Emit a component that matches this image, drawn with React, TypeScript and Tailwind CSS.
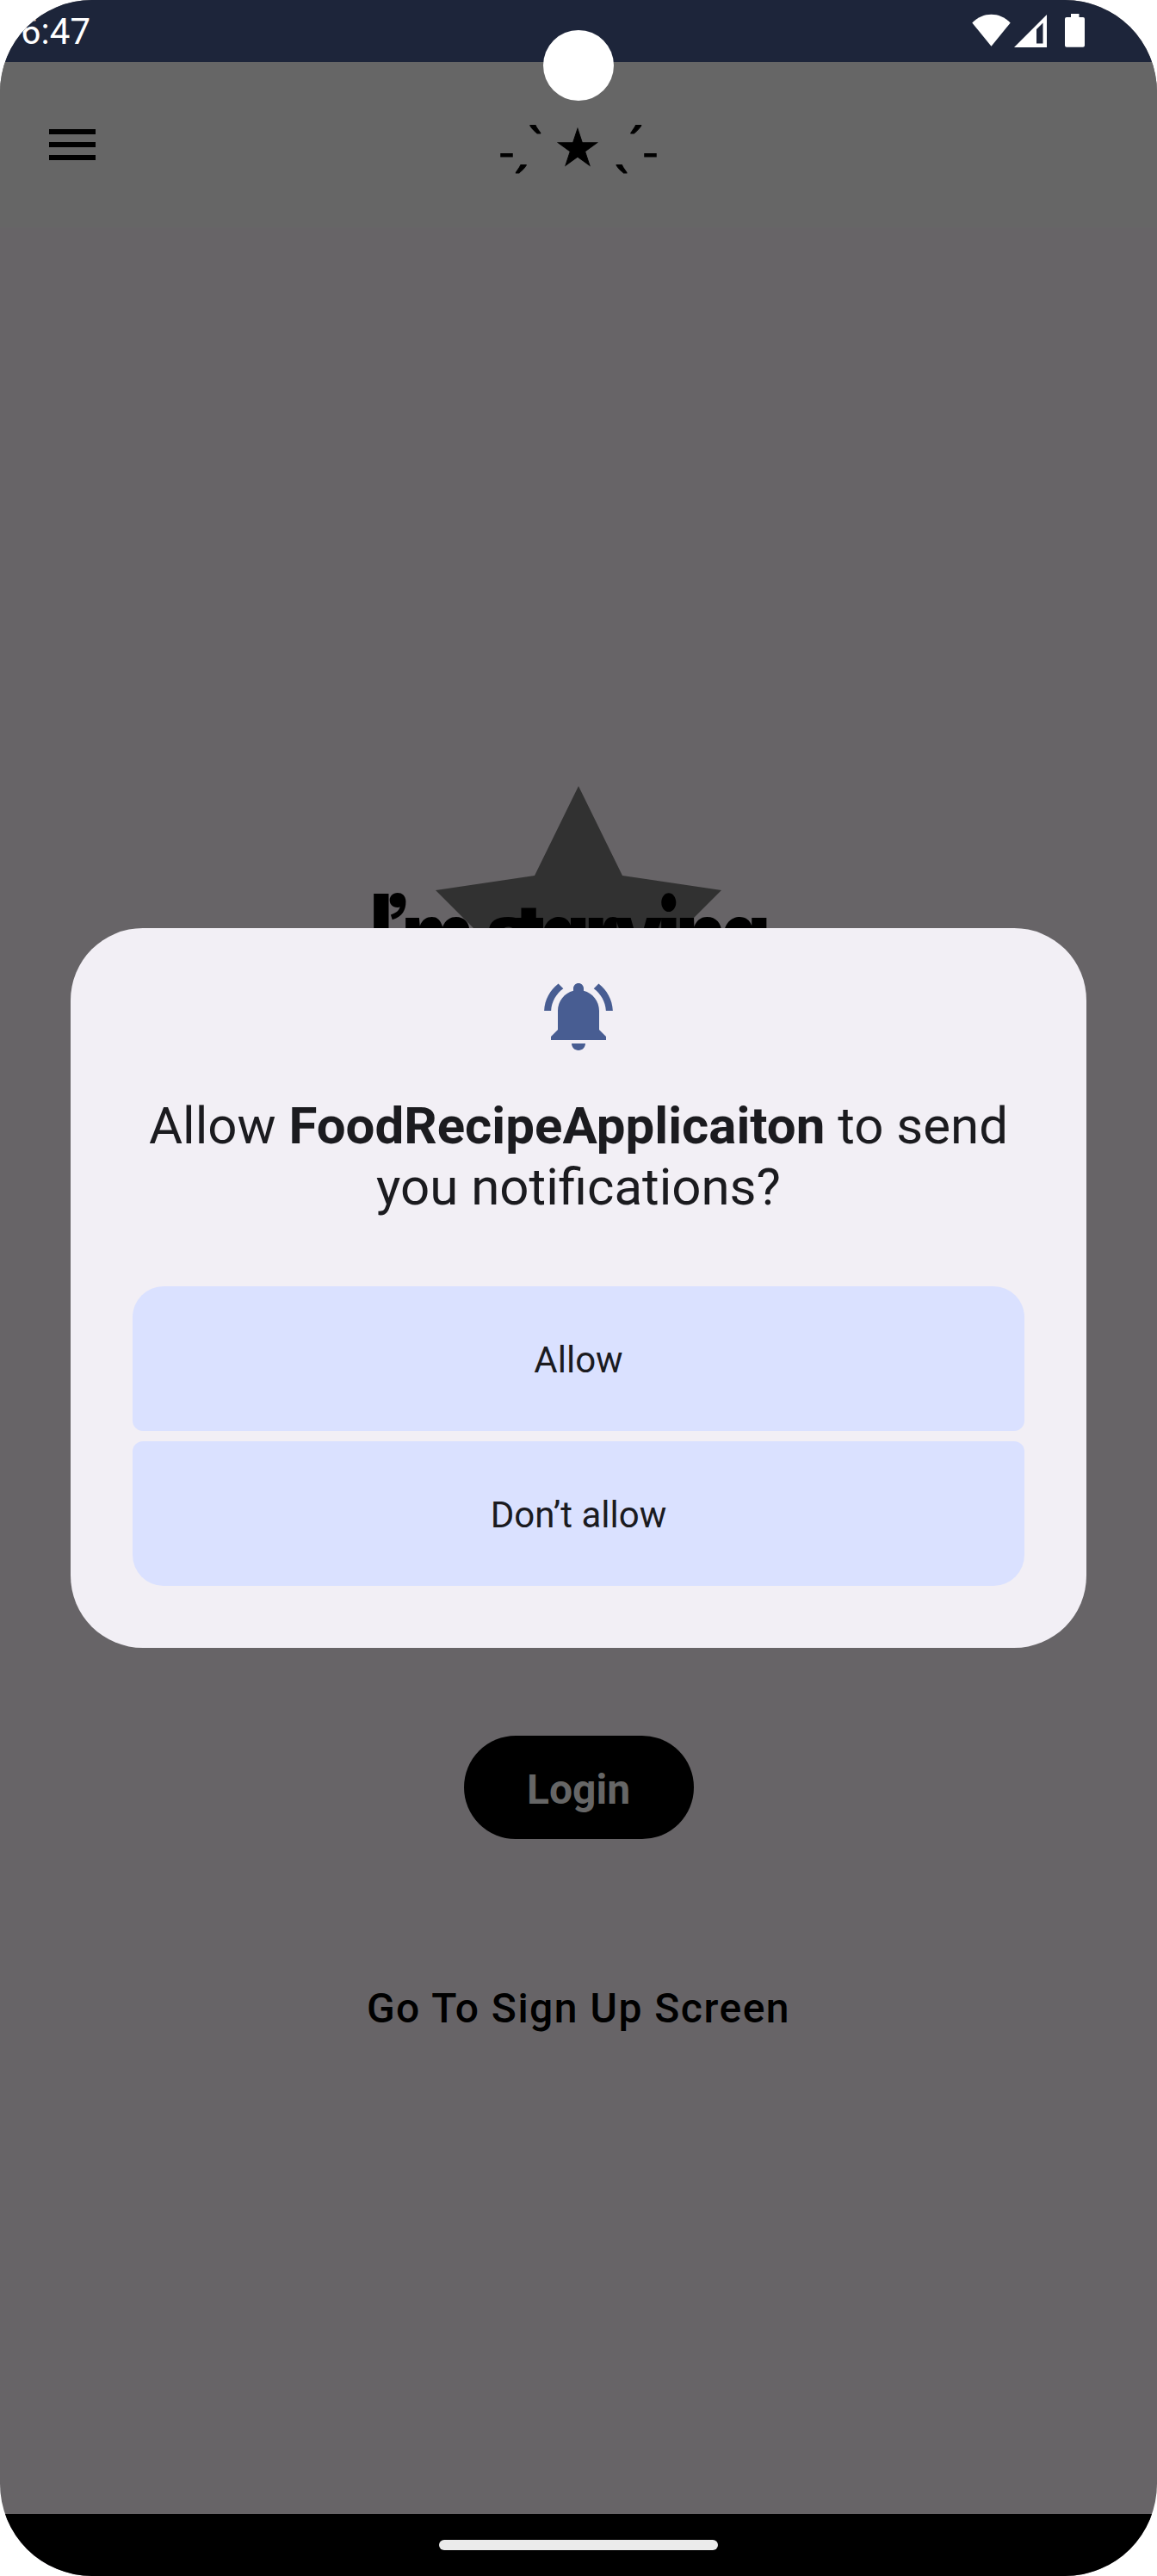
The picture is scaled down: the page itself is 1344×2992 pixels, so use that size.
import React from "react";

function StatusBar() {
  return (
    <div className="flex h-[72px] shrink-0 items-start justify-between bg-[#1d253a] pl-6 text-white">
      <span className="pt-[13px] text-[42px] leading-[48px]">6:47</span>
      <svg className="h-[72px] w-[244px]" viewBox="1100 0 244 72" fill="#fff">
        <path d="M1129.3 26.5C1142 13.5 1161 13.5 1173.7 26.5L1151.5 53.7Z" />
        <path fillRule="evenodd" d="M1178 55L1216 17V55ZM1204 34V50.5H1211.5V26.5Z" />
        <path d="M1244 16h9.500v4h4.500a2 2 0 0 1 2 2v30.700a2 2 0 0 1-2 2h-19a2 2 0 0 1-2-2v-30.700a2 2 0 0 1 2-2h5z" />
      </svg>
    </div>
  );
}

function Header() {
  return (
    <header className="flex h-[192px] shrink-0 items-center bg-[#666666] pl-12">
      <svg className="size-[72px]" viewBox="0 0 24 24">
        <path d="M3 18h18v-2H3v2zm0-5h18v-2H3v2zm0-7v2h18V6H3z" />
      </svg>
      <div className="ml-[456px] flex w-48 justify-center whitespace-pre font-['Noto_Sans','DejaVu_Sans',sans-serif] text-[59px] leading-[72px] [-webkit-text-stroke:1px_black]">
        <span className="relative top-[7px]">˗</span>
        <span className="relative -top-0.5">ˏ</span>
        <span>ˋ</span>
        <span className="relative top-px right-px"> ★ </span>
        <span className="relative -top-0.5">ˎ</span>
        <span>ˊ</span>
        <span className="relative top-[7px]">˗</span>
      </div>
    </header>
  );
}

function Headline() {
  return (
    <div className="absolute top-[97px] -left-0.5 flex w-[480px] items-baseline whitespace-pre font-['Inter',sans-serif] text-[88px] leading-[120px] font-black [font-feature-settings:'cv11','ss03']">
      <span className="relative -top-3 tracking-[-8px]">I’</span>
      <span className="-ml-0.5">m</span>
      <span className="ml-[15px] tracking-[-18px]">s</span>
      <span className="tracking-[-5px]">tarv</span>
      <span className="relative top-[18px] -mr-[9px] -ml-1.5 inline-block scale-x-[0.73] text-[121px]">i</span>
      <span className="tracking-[-5px]">ng</span>
    </div>
  );
}

function Dialog() {
  return (
    <div className="absolute top-[1078px] left-[82px] flex h-[836px] w-[1180px] flex-col items-center rounded-[84px] bg-[#f2eff5] px-[72px] pt-[54px] text-[#1b1b1f]">
      <svg className="size-24 shrink-0" viewBox="0 0 24 24" fill="#485d92">
        <path d="M7.58 4.08L6.15 2.65C3.75 4.48 2.17 7.3 2.03 10.5h2c.15-2.65 1.51-4.97 3.55-6.42zm12.39 6.42h2c-.15-3.2-1.73-6.02-4.12-7.85l-1.42 1.43c2.02 1.45 3.39 3.77 3.54 6.42zM18 10.5c0-2.8-1.9-5.15-4.5-5.81V4c0-.83-.67-1.5-1.5-1.5s-1.5.67-1.5 1.5v.69C7.9 5.350 6 7.7 6 10.5V16l-2 2v1h16v-1l-2-2v-5.500zM12 22c1.1 0 2-.9 2-2h-4c0 1.1.9 2 2 2z" />
      </svg>
      <h1 className="mt-[44px] text-center text-[60px] leading-[71px]">
        Allow <b className="font-bold">FoodRecipeApplicaiton</b> to send
        <br />
        you notifications?
      </h1>
      <div className="mt-auto mb-[72px] flex w-full flex-col gap-3 text-[42px]">
        <button className="h-[168px] rounded-t-[36px] rounded-b-[12px] bg-[#dae1ff] pt-[3px]">Allow</button>
        <button className="h-[168px] rounded-t-[12px] rounded-b-[36px] bg-[#dae1ff] pt-[3px]">Don’t allow</button>
      </div>
    </div>
  );
}

export default function App() {
  return (
    <div className="h-[2992px] w-[1344px] bg-white">
      <div className="relative flex h-full w-full flex-col overflow-hidden rounded-[107px] bg-[#676467] font-['Roboto',sans-serif] text-black">
        <StatusBar />
        <Header />
        <main className="flex grow flex-col items-center">
          <div className="relative mt-[649px] h-[360px] w-[480px]">
            <svg className="mx-auto h-[360px] w-[332px]" viewBox="506 913 332 360" fill="#313131">
              <path d="M672 913L723 1017L838 1034L755 1117L774 1232L672 1178L570 1232L589 1117L506 1034L621 1017Z" />
            </svg>
            <Headline />
          </div>
          <button className="mt-[743px] h-[120px] w-[267px] rounded-full bg-black pt-[5px] text-[48px] font-bold text-[#666666]">Login</button>
          <a className="mt-[169px] text-[48px] leading-[56px] font-medium tracking-[1.5px]">Go To Sign Up Screen</a>
        </main>
        <nav className="flex h-[72px] shrink-0 items-center justify-center bg-black">
          <div className="h-3 w-[324px] rounded-full bg-[#ebebeb]" />
        </nav>
        <div className="absolute top-[35px] left-[631px] size-[82px] rounded-full bg-white" />
        <Dialog />
      </div>
    </div>
  );
}
